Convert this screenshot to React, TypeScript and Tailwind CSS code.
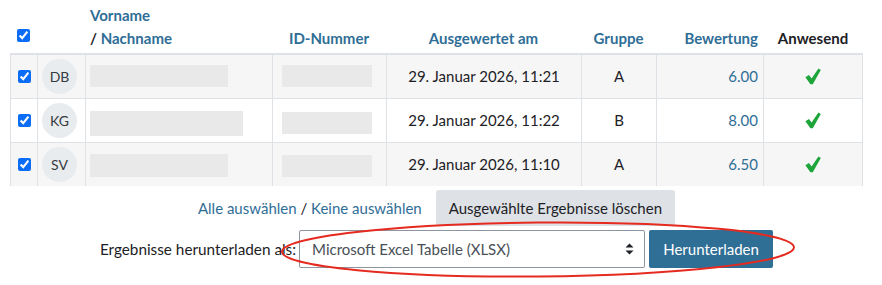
import React from "react";

const LINK = "text-[#2f6e96]";

type Row = {
  ini: string;
  nameW: number;
  nameH: number;
  nameTop: number;
  idTop: number;
  date: string;
  group: string;
  grade: string;
  striped: boolean;
};

const rows: Row[] = [
  { ini: "DB", nameW: 138, nameH: 22, nameTop: 10, idTop: 10, date: "29. Januar 2026, 11:21", group: "A", grade: "6.00", striped: true },
  { ini: "KG", nameW: 153, nameH: 25, nameTop: 12, idTop: 13, date: "29. Januar 2026, 11:22", group: "B", grade: "8.00", striped: false },
  { ini: "SV", nameW: 138, nameH: 23, nameTop: 11, idTop: 12, date: "29. Januar 2026, 11:10", group: "A", grade: "6.50", striped: true },
];

function Check() {
  return (
    <svg width="16" height="17" viewBox="0 0 16 17" aria-hidden="true">
      <path
        d="M0.4 9.2 L4 7 L6.6 10.6 L13.4 0.5 L15.8 2 L7.8 16.2 L5.4 16.2 Z"
        fill="#1da53a"
      />
    </svg>
  );
}

function Box() {
  return (
    <input
      type="checkbox"
      defaultChecked
      className="m-0 h-[13px] w-[13px] accent-[#0b6cf5]"
    />
  );
}

export default function App() {
  const grid =
    "grid grid-cols-[27px_48px_187px_114px_195px_75px_107px_100px]";
  return (
    <div className="relative h-[285px] w-[882px] overflow-hidden bg-white font-['Lato',sans-serif] text-[15px] text-[#1d2125]">
      <div className="ml-[10px] w-[853px]">
        {/* header */}
        <div className={`${grid} h-[53px] font-bold leading-[23px]`}>
          <div className="flex items-end justify-center pb-[11px]">
            <Box />
          </div>
          <div />
          <div className="flex flex-col justify-end px-[5px] pb-[3px]">
            <span className={LINK}>Vorname</span>
            <span>
              / <span className={LINK}>Nachname</span>
            </span>
          </div>
          <div className={`flex items-end justify-center pb-[3px] ${LINK}`}>ID-Nummer</div>
          <div className={`flex items-end justify-center pb-[3px] ${LINK}`}>Ausgewertet am</div>
          <div className={`flex items-end justify-center pb-[3px] ${LINK}`}>Gruppe</div>
          <div className={`flex items-end justify-end px-[5px] pb-[3px] ${LINK}`}>Bewertung</div>
          <div className="flex items-end justify-center pb-[3px] text-[#1d2125]">Anwesend</div>
        </div>
        {/* body */}
        {rows.map((r, i) => (
          <div
            key={r.ini}
            className={`${grid} ${i === 0 ? "h-[45px] border-t-2" : "h-[44px] border-t"} border-[#dee2e6] ${
              r.striped ? "bg-[#f6f6f6]" : "bg-white"
            }`}
          >
            <div className="flex items-center justify-center border-l border-[#dee2e6]">
              <Box />
            </div>
            <div className="flex items-center border-l border-[#dee2e6] pl-[4px]">
              <div className="flex h-[35px] w-[35px] items-center justify-center rounded-full bg-[#e9ecef] text-[14px] text-[#343a40]">
                {r.ini}
              </div>
            </div>
            <div className="border-l border-[#dee2e6] pl-[4px]">
              <div
                className="bg-[#e9e9e9]"
                style={{ width: r.nameW, height: r.nameH, marginTop: r.nameTop }}
              />
            </div>
            <div className="border-l border-[#dee2e6] pl-[9px]">
              <div className="h-[22px] w-[90px] bg-[#e9e9e9]" style={{ marginTop: r.idTop }} />
            </div>
            <div className="flex items-center justify-center border-l border-[#dee2e6]">
              {r.date}
            </div>
            <div className="flex items-center justify-center border-l border-[#dee2e6]">
              {r.group}
            </div>
            <div className={`flex items-center justify-end border-l border-[#dee2e6] pr-[5px] ${LINK}`}>
              {r.grade}
            </div>
            <div className="flex items-center justify-center border-x border-[#dee2e6]">
              <Check />
            </div>
          </div>
        ))}

        {/* actions */}
        <div className="mt-[4px] flex items-center justify-center gap-[14px]">
          <div className={LINK}>
            Alle auswählen <span className="text-[#1d2125]">/</span> Keine auswählen
          </div>
          <button className="h-[36px] rounded-t-[3px] bg-[#dee2e6] px-[13px] leading-[22px] text-[#1d2125]">
            Ausgewählte Ergebnisse löschen
          </button>
        </div>
        <div className="mt-[4px] flex items-center justify-center">
          <span className="mr-[3px] text-[15.3px]">Ergebnisse herunterladen als:</span>
          <div className="flex h-[38px] w-[346px] items-center justify-between rounded-[2px] border border-[#8f959e] bg-white pl-[12px] pr-[10px] text-[#495057]">
            <span>Microsoft Excel Tabelle (XLSX)</span>
            <svg width="9" height="12" viewBox="0 0 9 12" aria-hidden="true">
              <path d="M4.5 0.5 L8.5 4.5 L0.5 4.5 Z" fill="#1d2125" />
              <path d="M0.5 7.5 L8.5 7.5 L4.5 11.5 Z" fill="#1d2125" />
            </svg>
          </div>
          <button className="ml-[4px] h-[38px] w-[124px] rounded-[2px] bg-[#2f6f96] text-white">
            Herunterladen
          </button>
        </div>
      </div>

      <svg
        className="pointer-events-none absolute left-0 top-0"
        width="882"
        height="285"
        viewBox="0 0 882 285"
      >
        <ellipse
          cx="538"
          cy="249.5"
          rx="256"
          ry="27"
          transform="rotate(-0.5 538 249.5)"
          fill="none"
          stroke="#e52a20"
          strokeWidth="2"
        />
      </svg>
    </div>
  );
}
